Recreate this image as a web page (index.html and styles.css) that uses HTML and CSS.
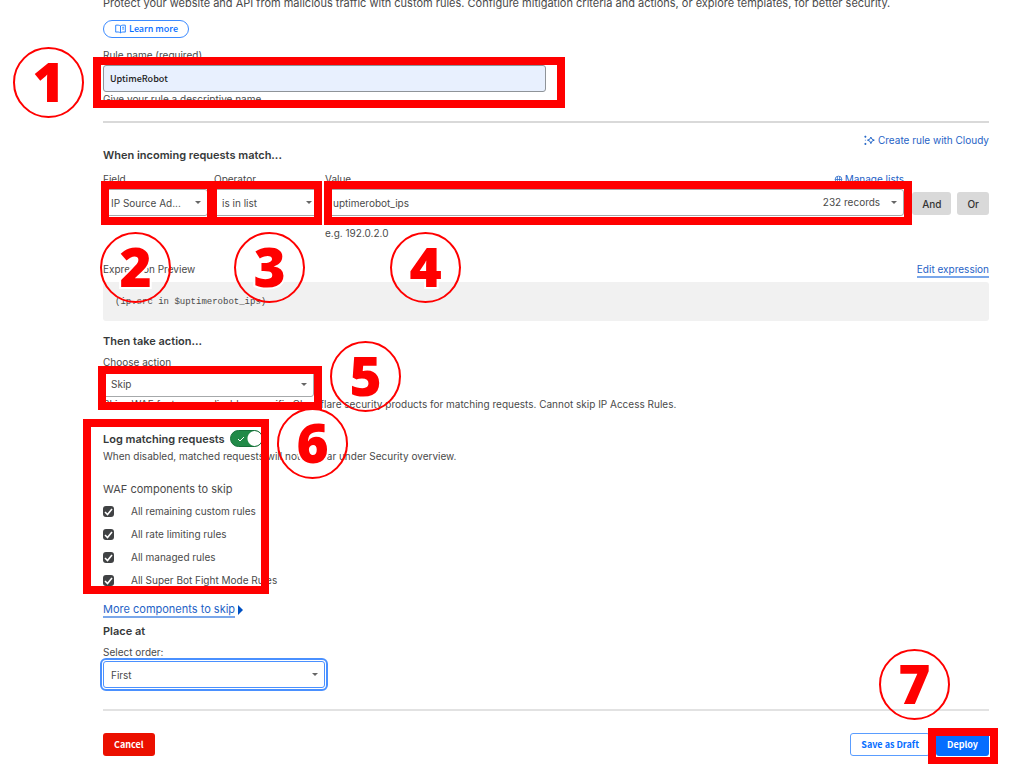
FILE: index.html
```
<!DOCTYPE html>
<html lang="en">
<head>
  <meta charset="UTF-8">
  <meta name="viewport" content="width=device-width, initial-scale=1.0">
  <title>Custom rule - UptimeRobot</title>
  <link rel="stylesheet" href="styles.css">
</head>
<body>
  <form class="page">
    <p class="intro">Protect your website and API from malicious traffic with custom rules. Configure mitigation criteria and actions, or explore templates, for better security.</p>
    <a class="learn-more" href="#">
      <svg viewBox="0 0 16 14" width="11" height="10" fill="none" stroke="currentColor" stroke-width="1.2"><path d="M8 2.500v10M8 2.500C6 1.200 3.500 1.200 1 1.500v10c2.500-.3 5-.3 7 1 2-1.300 4.500-1.300 7-1v-10c-2.500-.3-5-.3-7 1zM10.500 4.500h2.500M10.500 7h2.500"/></svg>
      Learn more
    </a>

    <!-- Rule name -->
    <div class="rule-name">
      <label for="ruleName">Rule name (required)</label>
      <input type="text" id="ruleName" value="UptimeRobot">
      <p class="hint">Give your rule a descriptive name.</p>
      <span class="frame frame-name"></span>
      <span class="step step-1">1</span>
    </div>

    <hr>

    <div class="cloudy">
      <a href="#">
        <svg viewBox="0 0 16 16" width="11" height="11" fill="none" stroke="currentColor" stroke-width="1.400"><path d="M10 3l1.500 3L15 7.500 11.500 9 10 12.500 8.500 9 5 7.500 8.500 6z"/><path d="M2 1v3M.5 2.500h3M2 11.500v3M.5 13h3M2 7v1"/></svg>
        Create rule with Cloudy
      </a>
    </div>

    <!-- Match conditions -->
    <h2 class="match-title">When incoming requests match...</h2>
    <div class="conditions">
      <div class="cell">
        <label for="field">Field</label>
        <select id="field"><option>IP Source Ad...</option></select>
        <span class="frame frame-field"></span>
        <span class="step step-2">2</span>
      </div>
      <div class="cell">
        <label for="operator">Operator</label>
        <select id="operator"><option>is in list</option></select>
        <span class="frame frame-operator"></span>
        <span class="step step-3">3</span>
      </div>
      <div class="cell">
        <div class="value-head">
          <label for="value">Value</label>
          <a class="manage" href="#">
            <svg viewBox="0 0 12 12" width="9" height="9" fill="none" stroke="currentColor" stroke-width="1"><circle cx="6" cy="6" r="4.500"/><path d="M1.500 6h9M4.500 2v8M7.500 2v8"/></svg>
            Manage lists
          </a>
        </div>
        <div class="value-box">
          <select id="value"><option>uptimerobot_ips</option></select>
          <span class="records">232 records</span>
        </div>
        <p class="example">e.g. 192.0.2.0</p>
        <span class="frame frame-value"></span>
        <span class="step step-4">4</span>
      </div>
      <div class="logic">
        <button type="button" class="grey">And</button>
        <button type="button" class="grey">Or</button>
      </div>
    </div>

    <div class="preview-head">
      <span>Expression Preview</span>
      <a class="underlined" href="#">Edit expression</a>
    </div>
    <pre class="preview">(ip.src in $uptimerobot_ips)</pre>

    <!-- Action -->
    <h2>Then take action...</h2>
    <div class="action">
      <label for="action">Choose action</label>
      <select id="action"><option>Skip</option></select>
      <p class="hint">Skips WAF features or disables specific Cloudflare security products for matching requests. Cannot skip IP Access Rules.</p>
      <span class="frame frame-action"></span>
      <span class="step step-5">5</span>
    </div>

    <div class="skip">
      <div class="log-row">
        <label class="log-label" for="log">Log matching requests</label>
        <input type="checkbox" id="log" class="toggle" checked>
      </div>
      <p class="log-hint">When disabled, matched requests will not appear under Security overview.</p>
      <h3>WAF components to skip</h3>
      <div class="checks">
        <label><input type="checkbox" class="check" checked>All remaining custom rules</label>
        <label><input type="checkbox" class="check" checked>All rate limiting rules</label>
        <label><input type="checkbox" class="check" checked>All managed rules</label>
        <label><input type="checkbox" class="check" checked>All Super Bot Fight Mode Rules</label>
      </div>
      <span class="frame frame-skip"></span>
      <span class="step step-6">6</span>
    </div>
    <div class="more"><a class="underlined" href="#">More components to skip</a></div>

    <!-- Order -->
    <h2>Place at</h2>
    <div class="order">
      <label for="order">Select order:</label>
      <select id="order"><option>First</option></select>
    </div>

    <hr class="light">

    <div class="actions">
      <button type="button" class="cancel">Cancel</button>
      <button type="button" class="draft">Save as Draft</button>
      <div class="deploy-box">
        <button type="submit" class="deploy">Deploy</button>
        <span class="frame frame-deploy"></span>
        <span class="step step-7">7</span>
      </div>
    </div>
  </form>
</body>
</html>
```
FILE: styles.css
```
:root {
  --text: #4a4a4a;
  --heading: #36393a;
  --link: #1f63c6;
  --blue: #056dff;
  --border: #a6a9ab;
  --mark: #ff0000;
  --ui: "Noto Sans CJK JP", "Noto Sans", sans-serif;
}
* { box-sizing: border-box; margin: 0; padding: 0; }
body {
  font-family: Inter, sans-serif;
  font-size: 10px;
  line-height: 14px;
  color: var(--text);
  background: #fff;
}
.page {
  display: flow-root;
  padding: 0 35px 8px 103px;
}
.intro {
  margin-top: -5px;
  font-size: 11px;
  line-height: 16px;
  white-space: nowrap;
}
a {
  color: var(--link);
  text-decoration: none;
}
label {
  display: block;
}
h2 {
  font-size: 11px;
  line-height: 16px;
  font-weight: 600;
  color: var(--heading);
}
hr {
  height: 2px;
  border: none;
  background: #d9d9d9;
}
.learn-more {
  display: inline-flex;
  align-items: center;
  gap: 3px;
  height: 18px;
  margin-top: 9px;
  padding: 0 10px 0 11px;
  border: 1px solid #3d8bff;
  border-radius: 9px;
  font-family: var(--ui);
  font-size: 9px;
  font-weight: 500;
  color: var(--blue);
  vertical-align: top;
}

/* Form fields */
.rule-name {
  position: relative;
  margin-top: 10px;
}
.rule-name input {
  display: block;
  width: 50%;
  height: 27px;
  margin-top: 3px;
  padding: 0 6px;
  border: 1px solid #8f9499;
  border-radius: 3px;
  background: #e8f0fe;
  font-family: var(--ui);
  font-size: 9px;
  font-weight: 500;
  color: #222;
}
.rule-name + hr {
  margin-top: 15px;
}
select {
  display: block;
  width: 100%;
  height: 27px;
  padding: 0 20px 0 7px;
  border: 1px solid var(--border);
  border-radius: 3px;
  appearance: none;
  background: #fff url("data:image/svg+xml,%3Csvg xmlns='http://www.w3.org/2000/svg' viewBox='0 0 6 3'%3E%3Cpath d='M0 0h6L3 3z' fill='%23666'/%3E%3C/svg%3E") no-repeat right 6px center / 6px 3px;
  font-family: inherit;
  font-size: 10px;
  color: var(--text);
}
.cloudy {
  display: flex;
  justify-content: flex-end;
  margin-top: 10px;
}
.cloudy a {
  display: flex;
  align-items: center;
  gap: 3px;
}
.match-title {
  margin-bottom: 9px;
}
.conditions {
  display: grid;
  grid-template-columns: 105px 105px 1fr auto;
  column-gap: 6px;
}
.cell {
  position: relative;
}
.cell select {
  margin-top: 3px;
}
.value-head {
  display: flex;
  justify-content: space-between;
}
.manage {
  display: flex;
  align-items: center;
  gap: 2px;
}
.value-box {
  position: relative;
}
.records {
  position: absolute;
  top: 6px;
  right: 24px;
}
.example {
  margin-top: 10px;
}
.logic {
  display: flex;
  align-items: flex-start;
  gap: 6px;
  padding: 20px 0 0 2px;
}
button {
  height: 23px;
  border: none;
  border-radius: 3px;
  font-family: var(--ui);
  font-size: 9px;
  font-weight: 700;
}
.grey {
  padding: 0 10px;
  background: #d9d9d9;
  color: #333;
  font-family: inherit;
  font-size: 10px;
  font-weight: 500;
}
.preview-head {
  display: flex;
  justify-content: space-between;
  margin-top: 22px;
}
.underlined {
  border-bottom: 2px solid #7aa7ea;
}
.preview {
  margin-top: 4px;
  padding: 13px 12px 12px;
  border-radius: 3px;
  background: #f1f1f1;
  font-family: "Liberation Mono", monospace;
  font-size: 9px;
}
.preview + h2 {
  margin-top: 12px;
}

/* Action */
.action {
  position: relative;
  margin-top: 6px;
}
.action select {
  width: 211px;
  height: 26px;
  margin-top: 2px;
}
.skip {
  position: relative;
  margin-top: 19px;
}
.log-row {
  display: flex;
  align-items: center;
  gap: 5px;
}
.log-label {
  font-size: 11px;
  font-weight: 600;
  color: var(--heading);
}
.log-hint {
  margin-top: 2px;
}
.toggle {
  appearance: none;
  width: 33px;
  height: 17px;
  border: 1px solid #17703a;
  border-radius: 9px;
  background:
    url("data:image/svg+xml,%3Csvg xmlns='http://www.w3.org/2000/svg' viewBox='0 0 8 6'%3E%3Cpath d='M1 3l2 2 4-4' fill='none' stroke='white'/%3E%3C/svg%3E") no-repeat 6px center / 8px 6px,
    radial-gradient(circle at 24px 50%, #fff 7px, transparent 8px),
    #218a48;
}
h3 {
  margin-top: 18px;
  font-size: 11px;
  line-height: 16px;
  font-weight: 400;
}
.checks {
  display: grid;
  gap: 9px;
  margin-top: 7px;
}
.checks label {
  display: flex;
  align-items: center;
  gap: 17px;
}
.check {
  appearance: none;
  width: 11px;
  height: 11px;
  border-radius: 3px;
  background: #404244 url("data:image/svg+xml,%3Csvg xmlns='http://www.w3.org/2000/svg' viewBox='0 0 11 11'%3E%3Cpath d='M2 6l2.500 2.500L9 3' fill='none' stroke='white' stroke-width='1.600'/%3E%3C/svg%3E");
}
.more {
  display: flex;
  align-items: center;
  gap: 3px;
  margin: 15px 0 5px;
  font-size: 11px;
}
.more::after {
  content: "";
  border: 5px solid transparent;
  border-left-color: #0051c3;
  border-right: none;
}
.order {
  margin-top: 6px;
}
.order select {
  width: 222px;
  margin-top: 2px;
  border-color: #4a90ff;
  outline: 2px solid #4a90ff;
  outline-offset: 1px;
}
.light {
  margin-top: 21px;
  background: #e2e2e2;
}

/* Footer buttons */
.actions {
  display: flex;
  margin-top: 22px;
}
.cancel {
  margin-right: auto;
  padding: 0 11px;
  background: #eb1000;
  color: #fff;
}
.draft {
  padding: 0 10px;
  border: 1px solid #5a9dff;
  background: #fff;
  color: var(--blue);
}
.deploy-box {
  position: relative;
  margin-left: 6px;
}
.deploy {
  display: block;
  padding: 0 11px;
  background: var(--blue);
  color: #fff;
}

/* Numbered marks over the form */
.frame {
  position: absolute;
  border: 8px solid var(--mark);
  pointer-events: none;
}
.frame-name { top: 9px; left: -10px; width: calc(50% + 29px); height: 51px; }
.frame-field { top: 9px; left: -2px; width: 114px; height: 44px; }
.frame-operator { top: 9px; left: -5px; width: 113px; height: 44px; }
.frame-value { top: 9px; left: -1px; right: -8px; height: 44px; }
.frame-action { top: 11px; left: -5px; width: 224px; height: 44px; }
.frame-skip { top: -11px; left: -20px; width: 186px; height: 175px; }
.frame-deploy { top: -5px; left: -8px; right: -9px; height: 37px; }
.step {
  position: absolute;
  z-index: 1;
  width: 71px;
  height: 71px;
  border: 2px solid var(--mark);
  border-radius: 50%;
  font-family: "Noto Sans", "Open Sans", sans-serif;
  font-size: 55px;
  font-weight: 900;
  line-height: 63px;
  text-align: center;
  color: var(--mark);
  -webkit-text-stroke: 4px #fff;
  paint-order: stroke fill;
  pointer-events: none;
}
.step-1 { top: -1px; left: -90px; }
.step-2 { top: 60px; left: -3px; }
.step-3 { top: 60px; left: 20px; }
.step-4 { top: 60px; left: 65px; }
.step-5 { top: -14px; left: 227px; }
.step-6 { top: -22px; left: 174px; }
.step-7 { top: -84px; left: -57px; }
```
